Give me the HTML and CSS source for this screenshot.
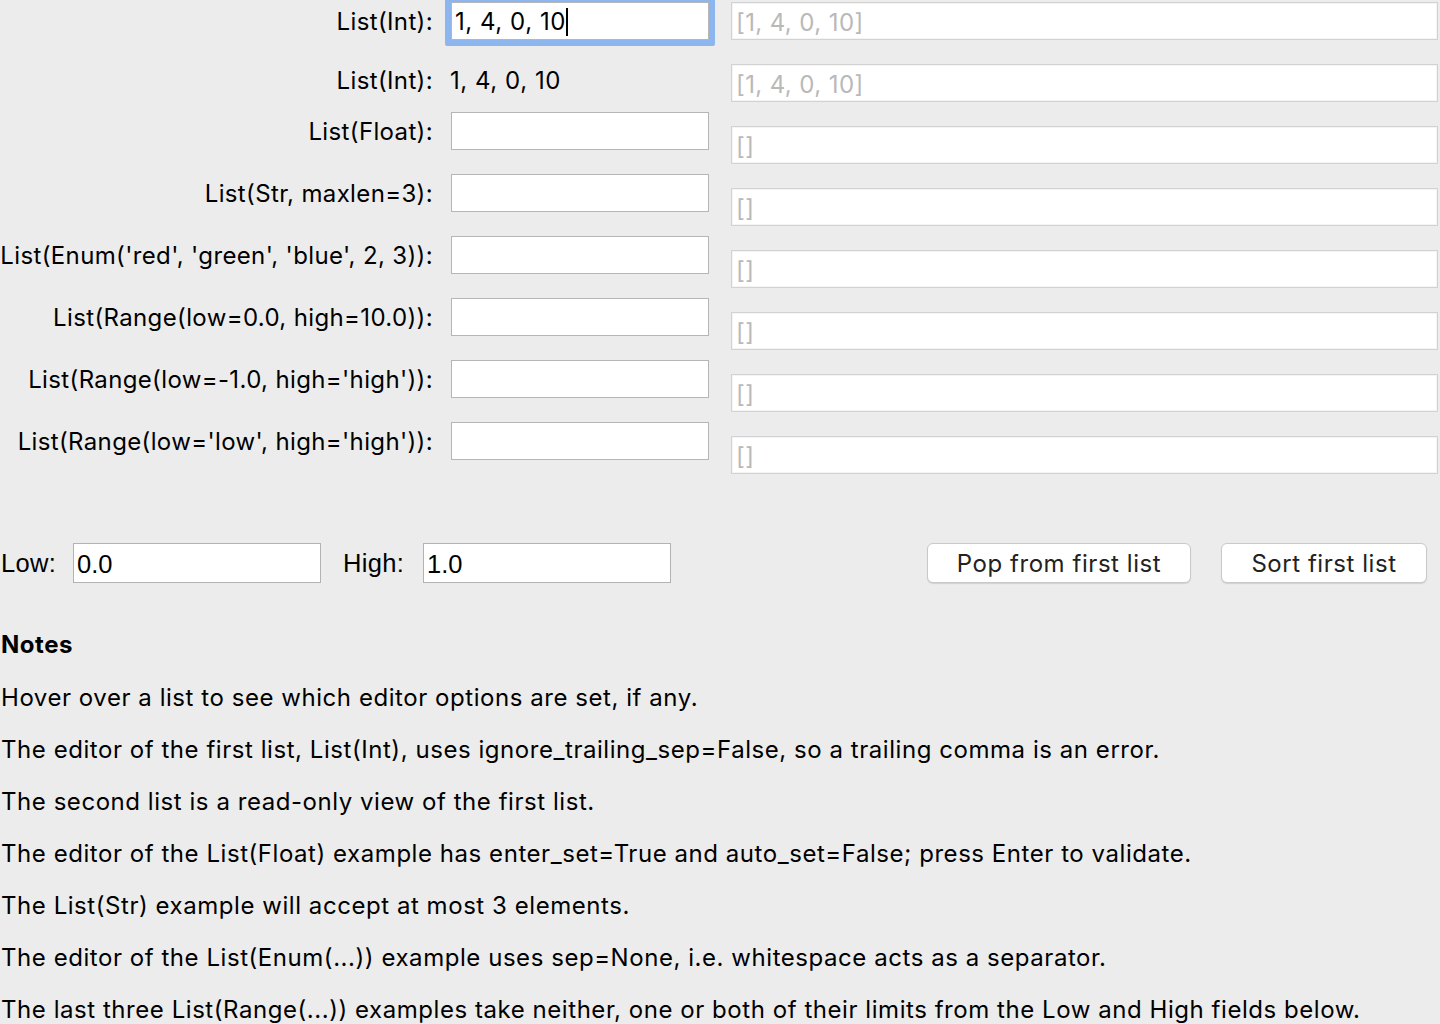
FILE: index.html
```html
<!DOCTYPE html>
<html>
<head>
<meta charset="utf-8">
<link rel="stylesheet" href="styles.css">
</head>
<body>
<main class="page">
  <section class="grid">
    <div class="label">List(Int):</div>
    <div class="field focused"><span class="val">1, 4, 0, 10</span><span class="caret"></span></div>
    <div class="ro">[1, 4, 0, 10]</div>

    <div class="label plain">List(Int):</div>
    <div class="plaintext">1, 4, 0, 10</div>
    <div class="ro">[1, 4, 0, 10]</div>

    <div class="label up">List(Float):</div>
    <div class="field up"></div>
    <div class="ro">[]</div>

    <div class="label up">List(Str, maxlen=3):</div>
    <div class="field up"></div>
    <div class="ro">[]</div>

    <div class="label up">List(Enum('red', 'green', 'blue', 2, 3)):</div>
    <div class="field up"></div>
    <div class="ro">[]</div>

    <div class="label up">List(Range(low=0.0, high=10.0)):</div>
    <div class="field up"></div>
    <div class="ro">[]</div>

    <div class="label up">List(Range(low=-1.0, high='high')):</div>
    <div class="field up"></div>
    <div class="ro">[]</div>

    <div class="label up">List(Range(low='low', high='high')):</div>
    <div class="field up"></div>
    <div class="ro">[]</div>
  </section>

  <section class="controls">
    <span class="clabel">Low:</span>
    <div class="cfield">0.0</div>
    <span class="clabel high">High:</span>
    <div class="cfield">1.0</div>
    <div class="spacer"></div>
    <button class="btn pop">Pop from first list</button>
    <button class="btn sort">Sort first list</button>
  </section>

  <section class="notes">
    <h2 class="notes-title">Notes</h2>
    <p>Hover over a list to see which editor options are set, if any.</p>
    <p>The editor of the first list, List(Int), uses ignore_trailing_sep=False, so a trailing comma is an error.</p>
    <p>The second list is a read-only view of the first list.</p>
    <p>The editor of the List(Float) example has enter_set=True and auto_set=False; press Enter to validate.</p>
    <p>The List(Str) example will accept at most 3 elements.</p>
    <p>The editor of the List(Enum(...)) example uses sep=None, i.e. whitespace acts as a separator.</p>
    <p>The last three List(Range(...)) examples take neither, one or both of their limits from the Low and High fields below.</p>
  </section>
</main>
</body>
</html>
```

FILE: styles.css
```css
html, body {
  margin: 0;
  padding: 0;
  background: #ececec;
  overflow: hidden;
}
body {
  font-family: Inter, "Noto Sans", sans-serif;
  font-size: 24px;
  letter-spacing: 0.55px;
  color: #000;
}
.page {
  width: 1440px;
  height: 1024px;
  padding-top: 2px;
  box-sizing: border-box;
}
.grid {
  display: grid;
  grid-template-columns: 433px 276px 729px;
  grid-template-rows: repeat(8, 62px);
}
.label {
  grid-column: 1;
  justify-self: end;
  text-align: right;
  white-space: nowrap;
  line-height: 38px;
  height: 39px;
  padding-top: 1px;
  box-sizing: border-box;
  align-self: start;
  letter-spacing: 0.36px;
}
.label.plain {
  line-height: 30px;
  height: 32px;
  padding-top: 2px;
}
.up {
  margin-top: -14px;
}
.field {
  grid-column: 2;
  margin-left: 18px;
  width: 258px;
  height: 38px;
  box-sizing: border-box;
  border: 1px solid #b6b6b6;
  background: #fff;
  align-self: start;
}
.field.focused {
  border-radius: 0.5px;
  box-shadow: 0 0 0 6px #8db5ee;
  display: flex;
  align-items: center;
  padding-left: 3px;
  padding-top: 2px;
  line-height: 30px;
}
.caret {
  display: inline-block;
  width: 2px;
  height: 28px;
  background: #000;
}
.plaintext {
  grid-column: 2;
  margin-left: 17px;
  line-height: 30px;
  padding-top: 2px;
  align-self: start;
}
.ro {
  grid-column: 3;
  margin-left: 22px;
  width: 707px;
  height: 38px;
  box-sizing: border-box;
  border: 1px solid #d2d2d2;
  box-shadow: inset 0 0 0 1px #f4f4f4;
  background: #fff;
  color: #b9b9b9;
  padding: 3px 0 0 4px;
  line-height: 34px;
  align-self: start;
  letter-spacing: 0.4px;
}
.controls {
  display: flex;
  align-items: center;
  height: 40px;
  margin-top: 45px;
  padding-right: 13px;
}
.clabel {
  font-family: "Liberation Sans", Arial, sans-serif;
  font-size: 25.5px;
  letter-spacing: 0.3px;
  margin-left: 1px;
  width: 54px;
}
.clabel.high {
  margin-left: 22px;
  width: 62px;
}
.cfield {
  font-family: "Liberation Sans", Arial, sans-serif;
  font-size: 25.5px;
  letter-spacing: 0;
  width: 248px;
  height: 40px;
  box-sizing: border-box;
  border: 1px solid #b3b3b3;
  background: #fff;
  margin-left: 18px;
  padding-left: 3px;
  padding-top: 2px;
  line-height: 36px;
}
.spacer {
  flex: 1;
}
.btn {
  font-family: Inter, "Noto Sans", sans-serif;
  font-size: 24px;
  letter-spacing: 0.55px;
  color: #222;
  background: #fff;
  border: 1px solid #c9c9c9;
  border-radius: 6px;
  box-shadow: 0 1px 1px rgba(0,0,0,0.12);
  height: 40px;
  padding: 0;
}
.btn.pop {
  width: 264px;
}
.btn.sort {
  width: 206px;
  margin-left: 30px;
}
.notes-title {
  font-size: 24px;
  font-weight: 700;
  line-height: 30px;
  margin: 47px 0 12px 1px;
}
.notes p {
  margin: 0 0 0 1px;
  line-height: 52px;
  white-space: nowrap;
}
```
